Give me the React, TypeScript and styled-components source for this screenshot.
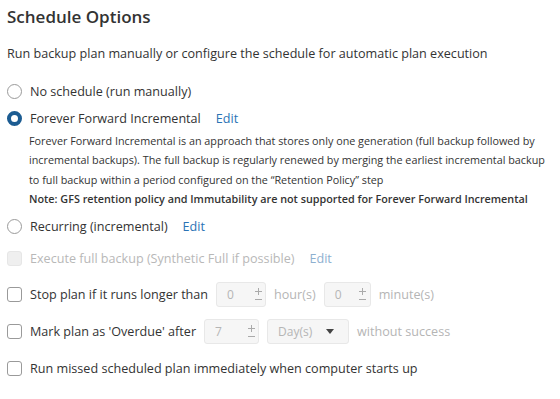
import React from "react";
import styled, { createGlobalStyle } from "styled-components";

const GlobalStyle = createGlobalStyle`
  body {
    margin: 0;
    background: #ffffff;
    font-family: "Open Sans", "Liberation Sans", sans-serif;
    color: #333333;
  }
`;

const Page = styled.div`
  padding: 5px 12px 0 7px;
  display: flex;
  flex-direction: column;
`;

const Title = styled.h2`
  margin: 0;
  font-size: 17px;
  font-weight: 600;
  line-height: 23px;
  color: #333;
`;

const Subtitle = styled.p`
  margin: 17px 0 0 0;
  font-size: 12.6px;
  line-height: 18px;
`;

const Options = styled.div`
  margin-top: 15px;
  display: flex;
  flex-direction: column;
`;

const Row = styled.label<{ $h: number; $disabled?: boolean }>`
  display: flex;
  align-items: center;
  gap: 8px;
  height: ${(p) => p.$h}px;
  font-size: 12.6px;
  color: ${(p) => (p.$disabled ? "#b8b8b8" : "#333")};
`;

const Radio = styled.span<{ $checked?: boolean }>`
  width: 15px;
  height: 15px;
  box-sizing: border-box;
  border-radius: 50%;
  flex-shrink: 0;
  border: ${(p) => (p.$checked ? "4px solid #1c5c92" : "1px solid #9a9a9a")};
  background: #fff;
`;

const Check = styled.span<{ $disabled?: boolean }>`
  width: 15px;
  height: 15px;
  box-sizing: border-box;
  border-radius: 3px;
  flex-shrink: 0;
  border: 1px solid ${(p) => (p.$disabled ? "#e6e6e6" : "#9a9a9a")};
  background: ${(p) => (p.$disabled ? "#efefef" : "#fff")};
`;

const Edit = styled.a<{ $disabled?: boolean }>`
  margin-left: 7px;
  color: ${(p) => (p.$disabled ? "#8eb0d0" : "#2a73b5")};
  text-decoration: none;
  cursor: pointer;
`;

const Desc = styled.div`
  padding-left: 22px;
  font-size: 10.8px;
  line-height: 19.3px;
  margin-top: -1px;
  margin-bottom: 5px;
`;

const Note = styled.div`
  font-weight: 600;
`;

const Spin = styled.span<{ $w: number }>`
  display: inline-flex;
  width: ${(p) => p.$w}px;
  height: 25px;
  box-sizing: border-box;
  border: 1px solid #e8e8e8;
  border-radius: 3px;
  background: #f6f6f6;
  color: #b5b5b5;
  font-size: 12px;
`;

const SpinValue = styled.span`
  flex: 1;
  display: flex;
  align-items: center;
  padding-left: 10px;
`;

const SpinArrows = styled.span`
  width: 14px;
  display: flex;
  flex-direction: column;
  align-items: center;
  justify-content: center;
  gap: 3px;
`;

const Select = styled.span`
  display: inline-flex;
  align-items: center;
  justify-content: space-between;
  width: 82px;
  height: 25px;
  box-sizing: border-box;
  border: 1px solid #e8e8e8;
  border-radius: 3px;
  background: #f6f6f6;
  color: #b5b5b5;
  font-size: 12px;
  padding: 0 14px 0 10px;
`;

const Muted = styled.span`
  color: #b5b5b5;
`;

function Spinner({ value, width }: { value: string; width: number }) {
  return (
    <Spin $w={width}>
      <SpinValue>{value}</SpinValue>
      <SpinArrows>
        <svg width="7" height="7" viewBox="0 0 7 7">
          <path d="M3.5 0v7M0 3.5h7" stroke="#aaa" strokeWidth="1" />
        </svg>
        <svg width="7" height="3" viewBox="0 0 7 3">
          <path d="M0 1.5h7" stroke="#aaa" strokeWidth="1" />
        </svg>
      </SpinArrows>
    </Spin>
  );
}

export default function App() {
  return (
    <>
      <GlobalStyle />
      <Page>
        <Title>Schedule Options</Title>
        <Subtitle>
          Run backup plan manually or configure the schedule for automatic plan execution
        </Subtitle>
        <Options>
          <Row $h={27}>
            <Radio />
            No schedule (run manually)
          </Row>
          <Row $h={27}>
            <Radio $checked />
            Forever Forward Incremental
            <Edit>Edit</Edit>
          </Row>
          <Desc>
            Forever Forward Incremental is an approach that stores only one generation (full backup followed by
            incremental backups). The full backup is regularly renewed by merging the earliest incremental backup
            to full backup within a period configured on the “Retention Policy” step
            <Note>Note: GFS retention policy and Immutability are not supported for Forever Forward Incremental</Note>
          </Desc>
          <Row $h={27}>
            <Radio />
            Recurring (incremental)
            <Edit>Edit</Edit>
          </Row>
          <Row $h={36} $disabled>
            <Check $disabled />
            Execute full backup (Synthetic Full if possible)
            <Edit $disabled>Edit</Edit>
          </Row>
          <Row $h={37}>
            <Check />
            Stop plan if it runs longer than
            <Spinner value="0" width={50} />
            <Muted>hour(s)</Muted>
            <Spinner value="0" width={47} />
            <Muted>minute(s)</Muted>
          </Row>
          <Row $h={37}>
            <Check />
            Mark plan as 'Overdue' after
            <Spinner value="7" width={55} />
            <Select>
              Day(s)
              <svg width="8" height="5" viewBox="0 0 8 5">
                <path d="M0 0h8L4 5z" fill="#444" />
              </svg>
            </Select>
            <Muted>without success</Muted>
          </Row>
          <Row $h={37}>
            <Check />
            Run missed scheduled plan immediately when computer starts up
          </Row>
        </Options>
      </Page>
    </>
  );
}
